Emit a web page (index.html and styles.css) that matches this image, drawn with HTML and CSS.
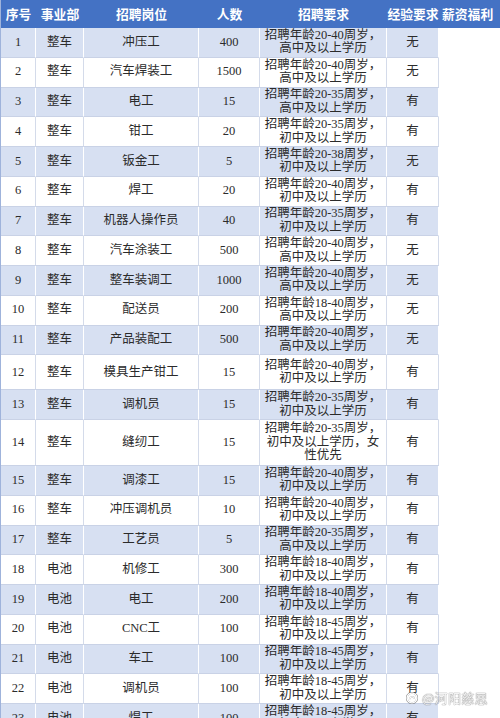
FILE: index.html
```html
<!DOCTYPE html>
<html lang="zh">
<head>
<meta charset="utf-8">
<title>招聘岗位表</title>
<link rel="stylesheet" href="styles.css">
</head>
<body>
<div class="sheet">
  <div class="row head">
    <div class="c">序号</div><div class="c">事业部</div><div class="c">招聘岗位</div><div class="c">人数</div><div class="c">招聘要求</div><div class="c">经验要求</div><div class="c">薪资福利</div>
  </div>
  <div class="row odd"><div class="c">1</div><div class="c">整车</div><div class="c">冲压工</div><div class="c">400</div><div class="c req">招聘年龄20-40周岁，<br>高中及以上学历</div><div class="c">无</div><div class="c x"></div></div>
  <div class="row"><div class="c">2</div><div class="c">整车</div><div class="c">汽车焊装工</div><div class="c">1500</div><div class="c req">招聘年龄20-40周岁，<br>高中及以上学历</div><div class="c">无</div><div class="c x"></div></div>
  <div class="row odd"><div class="c">3</div><div class="c">整车</div><div class="c">电工</div><div class="c">15</div><div class="c req">招聘年龄20-35周岁，<br>高中及以上学历</div><div class="c">有</div><div class="c x"></div></div>
  <div class="row"><div class="c">4</div><div class="c">整车</div><div class="c">钳工</div><div class="c">20</div><div class="c req">招聘年龄20-35周岁，<br>初中及以上学历</div><div class="c">有</div><div class="c x"></div></div>
  <div class="row odd"><div class="c">5</div><div class="c">整车</div><div class="c">钣金工</div><div class="c">5</div><div class="c req">招聘年龄20-38周岁，<br>初中及以上学历</div><div class="c">无</div><div class="c x"></div></div>
  <div class="row"><div class="c">6</div><div class="c">整车</div><div class="c">焊工</div><div class="c">20</div><div class="c req">招聘年龄20-40周岁，<br>初中及以上学历</div><div class="c">有</div><div class="c x"></div></div>
  <div class="row odd"><div class="c">7</div><div class="c">整车</div><div class="c">机器人操作员</div><div class="c">40</div><div class="c req">招聘年龄20-35周岁，<br>初中及以上学历</div><div class="c">有</div><div class="c x"></div></div>
  <div class="row"><div class="c">8</div><div class="c">整车</div><div class="c">汽车涂装工</div><div class="c">500</div><div class="c req">招聘年龄20-40周岁，<br>高中及以上学历</div><div class="c">无</div><div class="c x"></div></div>
  <div class="row odd"><div class="c">9</div><div class="c">整车</div><div class="c">整车装调工</div><div class="c">1000</div><div class="c req">招聘年龄20-40周岁，<br>高中及以上学历</div><div class="c">无</div><div class="c x"></div></div>
  <div class="row"><div class="c">10</div><div class="c">整车</div><div class="c">配送员</div><div class="c">200</div><div class="c req">招聘年龄18-40周岁，<br>高中及以上学历</div><div class="c">无</div><div class="c x"></div></div>
  <div class="row odd"><div class="c">11</div><div class="c">整车</div><div class="c">产品装配工</div><div class="c">500</div><div class="c req">招聘年龄20-40周岁，<br>高中及以上学历</div><div class="c">无</div><div class="c x"></div></div>
  <div class="row tall12"><div class="c">12</div><div class="c">整车</div><div class="c">模具生产钳工</div><div class="c">15</div><div class="c req">招聘年龄20-40周岁，<br>初中及以上学历</div><div class="c">有</div><div class="c x"></div></div>
  <div class="row odd"><div class="c">13</div><div class="c">整车</div><div class="c">调机员</div><div class="c">15</div><div class="c req">招聘年龄20-35周岁，<br>初中及以上学历</div><div class="c">有</div><div class="c x"></div></div>
  <div class="row tall14"><div class="c">14</div><div class="c">整车</div><div class="c">缝纫工</div><div class="c">15</div><div class="c req">招聘年龄20-35周岁，<br>初中及以上学历，女<br>性优先</div><div class="c">有</div><div class="c x"></div></div>
  <div class="row odd"><div class="c">15</div><div class="c">整车</div><div class="c">调漆工</div><div class="c">15</div><div class="c req">招聘年龄20-40周岁，<br>初中及以上学历</div><div class="c">有</div><div class="c x"></div></div>
  <div class="row"><div class="c">16</div><div class="c">整车</div><div class="c">冲压调机员</div><div class="c">10</div><div class="c req">招聘年龄20-40周岁，<br>初中及以上学历</div><div class="c">有</div><div class="c x"></div></div>
  <div class="row odd"><div class="c">17</div><div class="c">整车</div><div class="c">工艺员</div><div class="c">5</div><div class="c req">招聘年龄20-35周岁，<br>高中及以上学历</div><div class="c">有</div><div class="c x"></div></div>
  <div class="row"><div class="c">18</div><div class="c">电池</div><div class="c">机修工</div><div class="c">300</div><div class="c req">招聘年龄18-40周岁，<br>初中及以上学历</div><div class="c">有</div><div class="c x"></div></div>
  <div class="row odd"><div class="c">19</div><div class="c">电池</div><div class="c">电工</div><div class="c">200</div><div class="c req">招聘年龄18-40周岁，<br>初中及以上学历</div><div class="c">有</div><div class="c x"></div></div>
  <div class="row"><div class="c">20</div><div class="c">电池</div><div class="c">CNC工</div><div class="c">100</div><div class="c req">招聘年龄18-45周岁，<br>初中及以上学历</div><div class="c">有</div><div class="c x"></div></div>
  <div class="row odd"><div class="c">21</div><div class="c">电池</div><div class="c">车工</div><div class="c">100</div><div class="c req">招聘年龄18-45周岁，<br>初中及以上学历</div><div class="c">有</div><div class="c x"></div></div>
  <div class="row"><div class="c">22</div><div class="c">电池</div><div class="c">调机员</div><div class="c">100</div><div class="c req">招聘年龄18-45周岁，<br>初中及以上学历</div><div class="c">有</div><div class="c x"></div></div>
  <div class="row odd"><div class="c">23</div><div class="c">电池</div><div class="c">焊工</div><div class="c">100</div><div class="c req">招聘年龄18-45周岁，<br>初中及以上学历</div><div class="c">有</div><div class="c x"></div></div>
</div>
<div class="mark">
  <svg class="mark-icon" width="12" height="12" viewBox="0 0 12 12"><circle cx="6" cy="6" r="5" fill="none" stroke="#fff" stroke-width="1.6"/><path d="M3.6 7.2 C4.2 4.2 8 4.2 8.4 6.4" fill="none" stroke="#fff" stroke-width="1.4"/><circle cx="6" cy="6" r="5.9" fill="none" stroke="rgba(90,90,90,0.5)" stroke-width="0.6"/></svg>
  <span class="mark-text">@河阳慈思</span>
</div>
</body>
</html>
```
FILE: styles.css
```css
html, body {
  margin: 0;
  padding: 0;
  background: #ffffff;
}
body {
  width: 500px;
  height: 718px;
  overflow: hidden;
  position: relative;
  font-family: "Liberation Serif", "Noto Sans CJK SC", serif;
  font-size: 12.5px;
  color: #2b2b2b;
}
.sheet {
  display: flex;
  flex-direction: column;
  border-left: 1px solid #9fb3db;
  width: 500px;
  box-sizing: border-box;
}
.row {
  display: grid;
  grid-template-columns: 35px 48px 115px 61px 127px 52px 1fr;
  height: 29.75px;
  box-sizing: border-box;
  background: #ffffff;
}
.row.odd .c { background: #d7e0f2; border-right-color: #ffffff; }
.row .c {
  display: flex;
  align-items: center;
  justify-content: center;
  text-align: center;
  border-right: 1px solid #d4dbea;
  border-bottom: 1px solid #c9d2e6;
  box-sizing: border-box;
  line-height: 13.5px;
  white-space: nowrap;
  overflow: hidden;
}
.row .c.x,
.row.odd .c.x {
  background: #ffffff;
  border: none;
}
.row.tall12 { height: 35px; }
.row.tall14 { height: 46px; }
.row.head {
  height: 28px;
  background: #4472c4;
}
.row.head .c {
  background: #4472c4;
  color: #ffffff;
  font-family: "Noto Sans CJK SC", sans-serif;
  font-weight: bold;
  font-size: 12.8px;
  border: none;
}
.row.head .c:last-child {
  justify-content: flex-start;
  padding-left: 3px;
}
.mark {
  position: absolute;
  left: 406px;
  top: 688px;
  display: flex;
  align-items: center;
  gap: 4px;
  opacity: 0.9;
}
.mark-text {
  font-family: "Noto Sans CJK SC", sans-serif;
  font-size: 13px;
  color: rgba(255, 255, 255, 0.92);
  text-shadow: 0 0 1px rgba(60, 60, 60, 0.7), 0 0 1px rgba(60, 60, 60, 0.7);
  letter-spacing: 0.3px;
}
.mark-icon {
  filter: drop-shadow(0 0 0.6px rgba(60, 60, 60, 0.8));
}
```
